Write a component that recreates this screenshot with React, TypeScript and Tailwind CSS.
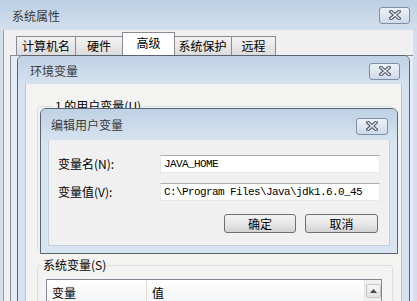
import React from "react";

const CloseBtn = ({ w = 31 }: { w?: number }) => (
  <div
    className={`${w === 31 ? "w-[31px]" : "w-[32px]"} h-[17px] rounded-[3px] border border-[#7d8ea8] bg-gradient-to-b from-[#eef3f9] to-[#cfdae7] flex items-center justify-center`}
  >
    <svg width="12" height="10" viewBox="0 0 12 10">
      <path d="M2 1.5 L10 8.5 M10 1.5 L2 8.5" stroke="#4f5968" strokeWidth="3.6" strokeLinecap="square" />
      <path d="M2 1.5 L10 8.5 M10 1.5 L2 8.5" stroke="#e9eef4" strokeWidth="1.4" strokeLinecap="square" />
    </svg>
  </div>
);

const Tab = ({ label, w, active }: { label: string; w: string; active?: boolean }) => (
  <div
    className={
      active
        ? `${w} h-[23px] border border-b-0 border-[#898c95] bg-white flex items-start justify-center pt-[3px] leading-[14px] -mx-[1px] z-10`
        : `${w} h-[19px] border border-b-0 border-l-0 first:border-l border-[#898c95] bg-gradient-to-b from-[#f3f3f3] to-[#dcdcdc] flex items-start justify-center pt-[2px] leading-[14px]`
    }
  >
    {label}
  </div>
);

export default function App() {
  return (
    <div className="relative w-[417px] h-[301px] overflow-hidden bg-[#d3dfec] text-[12px] text-black font-['Noto_Sans_CJK_SC','Liberation_Sans',sans-serif]">
      {/* Outer window: 系统属性 */}
      <div className="absolute left-0 top-0 w-[417px] h-[320px] flex flex-col bg-[#d3dfec]">
        <div className="h-[30px] flex items-center justify-between pl-[12px] pr-[7px] bg-gradient-to-b from-[#bccfe4] to-[#d3e0ee]">
          <span className="text-[#3a3a3a] leading-[14px] mt-[2px]">系统属性</span>
          <CloseBtn />
        </div>
        <div className="flex-1 ml-[3px] mr-[4px] bg-[#f0f0f0] border-l border-[#8f9db0] flex flex-col">
          <div className="h-[25px] flex items-end pl-[12px]">
            <Tab label="计算机名" w="w-[60px]" />
            <Tab label="硬件" w="w-[47px]" />
            <Tab label="高级" w="w-[53px]" active />
            <Tab label="系统保护" w="w-[58px]" />
            <Tab label="远程" w="w-[44px]" />
          </div>
          <div className="flex-1 ml-[6px] border-l border-t border-[#898c95] bg-[#e4ecf5]" />
        </div>
      </div>

      {/* 环境变量 window */}
      <div className="absolute left-[17px] top-[55px] w-[393px] h-[260px] border border-[#5b6571] rounded-t-[6px] overflow-hidden flex flex-col bg-[#d5e2f0]">
        <div className="h-[28px] shrink-0 flex items-center justify-between pl-[12px] pr-[9px] bg-gradient-to-b from-[#bfd1e5] to-[#d5e2ef]">
          <span className="text-[#3a3a3a] leading-[14px] mt-[1px]">环境变量</span>
          <div className="mt-[2px]">
            <CloseBtn />
          </div>
        </div>
        <div className="flex-1 mx-[7px] bg-[#f3f3f2] border-x border-[#b7c4d3] flex flex-col">
          <fieldset className="ml-[11px] w-[356px] h-[152px] mt-[15px] border border-[#d7dfe6] rounded-[3px]">
            <legend className="ml-[16px] px-[1px] leading-[14px]">1 的用户变量(U)</legend>
          </fieldset>
          <fieldset className="ml-[11px] w-[356px] h-[80px] mt-[7px] border border-[#d7dfe6] rounded-[3px]">
            <legend className="ml-[4px] px-[1px] leading-[14px]">系统变量(S)</legend>
            <div className="mt-[7px] ml-[8px] w-[336px] h-[60px] border border-[#828790] bg-white flex">
              <div className="flex-1 flex flex-col">
                <div className="h-[24px] flex items-center border-b border-[#d5d5d5] bg-gradient-to-b from-white to-[#f3f4f6]">
                  <div className="w-[100px] h-full pl-[5px] pt-[2px] flex items-center border-r border-[#dcdcdc] leading-[14px]">变量</div>
                  <div className="pl-[5px] pt-[2px] leading-[14px]">值</div>
                </div>
              </div>
              <div className="w-[17px] bg-[#f0f0f0] border-l border-[#e6e6e6] flex flex-col items-center pt-[4px]">
                <div className="w-[15px] h-[14px] rounded-[2px] border border-[#c4c4c4] bg-gradient-to-b from-[#f6f6f6] to-[#e2e2e2] flex items-center justify-center">
                  <svg width="7" height="4" viewBox="0 0 7 4">
                    <path d="M0 4 L3.5 0 L7 4 Z" fill="#4a4a4a" />
                  </svg>
                </div>
              </div>
            </div>
          </fieldset>
        </div>
      </div>

      {/* 编辑用户变量 dialog */}
      <div className="absolute left-[40px] top-[108px] w-[358px] h-[146px] border border-[#5b6571] rounded-t-[6px] overflow-hidden flex flex-col bg-[#d8e4f1]">
        <div className="h-[31px] shrink-0 flex items-center justify-between pl-[10px] pr-[9px] bg-gradient-to-b from-[#bfd1e5] to-[#d6e3f0]">
          <span className="text-[#3a3a3a] leading-[14px] mt-[1px]">编辑用户变量</span>
          <div className="mt-[3px]">
            <CloseBtn w={32} />
          </div>
        </div>
        <div className="flex-1 mx-[7px] mb-[7px] bg-[#f0f0f0] border-x border-b border-[#c3cfdd] pt-[15px] pl-[9px] pr-[9px] flex flex-col">
          <div className="flex items-center h-[18px]">
            <div className="w-[102px] leading-[14px]">变量名(N):</div>
            <div className="flex-1 h-[18px] bg-white border border-[#e3e9ef] border-t-[#abadb3] flex items-center pl-[3px] font-['Liberation_Mono',monospace] text-[11px] tracking-[-0.6px] leading-[12px]">
              JAVA_HOME
            </div>
          </div>
          <div className="flex items-center h-[18px] mt-[10px]">
            <div className="w-[102px] leading-[14px]">变量值(V):</div>
            <div className="flex-1 h-[18px] bg-white border border-[#e3e9ef] border-t-[#abadb3] flex items-center pl-[3px] font-['Liberation_Mono',monospace] text-[11px] tracking-[-0.6px] leading-[12px]">
              C:\Program Files\Java\jdk1.6.0_45
            </div>
          </div>
          <div className="flex justify-end gap-[9px] mt-[13px] pr-[2px]">
            <div className="w-[72px] h-[19px] rounded-[3px] border border-[#707070] bg-gradient-to-b from-[#f2f2f2] via-[#e8e8e8] to-[#d2d2d2] flex items-center justify-center leading-[14px]">
              确定
            </div>
            <div className="w-[73px] h-[19px] rounded-[3px] border border-[#707070] bg-gradient-to-b from-[#f2f2f2] via-[#e8e8e8] to-[#d2d2d2] flex items-center justify-center leading-[14px]">
              取消
            </div>
          </div>
        </div>
      </div>
    </div>
  );
}
